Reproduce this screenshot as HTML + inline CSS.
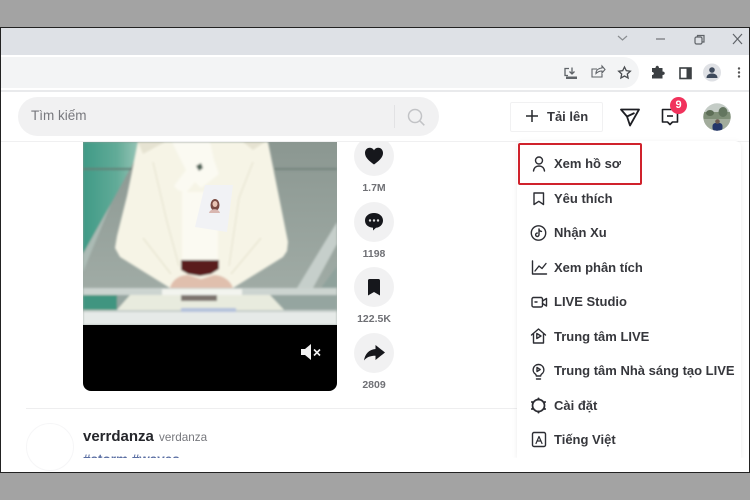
<!DOCTYPE html>
<html lang="vi">
<head>
<meta charset="utf-8">
<title>TikTok</title>
<style>
html{margin:0;padding:0;width:750px;height:500px;overflow:hidden;background:#a3a3a3}
body{margin:0;padding:0;width:750px;height:500px;overflow:hidden;background:#a3a3a3;font-family:"Liberation Sans","Noto Sans CJK SC",sans-serif;position:relative;filter:blur(.35px)}
*{box-sizing:border-box}
#win{position:absolute;left:0;top:27px;width:750px;height:446px;background:#fff;border:1px solid #222;overflow:hidden}
.t{position:absolute;white-space:nowrap;color:#36373c;font-weight:700;font-size:13px;line-height:16px}
.act{position:absolute;left:354px;width:40px;height:40px;border-radius:50%;background:#f1f1f2}
.cnt{position:absolute;left:344px;width:60px;text-align:center;font-size:10.5px;font-weight:700;color:#6f7075;line-height:12px;white-space:nowrap}
svg{position:absolute;overflow:visible}
</style>
</head>
<body>
<div id="win"></div>
<!-- Chrome strip -->
<div style="position:absolute;left:1px;top:28px;width:748px;height:27px;background:#dee1e6"></div>
<div style="position:absolute;left:1px;top:55px;width:748px;height:35px;background:#fff"></div>
<div style="position:absolute;left:1px;top:57px;width:638px;height:31px;background:#f3f4f5;border-radius:0 16px 16px 0"></div>
<div style="position:absolute;left:1px;top:90px;width:748px;height:2px;background:#e9eaec"></div>

<svg style="left:0;top:0" width="750" height="92" fill="none" stroke="#5f6368" stroke-width="1.2">
<path d="M618 36l4.500 4 4.500-4" stroke="#8a8d91"/>
<path d="M656 39h9" stroke="#6f7276"/>
<rect x="695" y="37" width="7" height="7" rx="1.500"/><path d="M697.500 37v-1.500h6.500v6.500h-2"/>
<path d="M733 34l9 10M742 34l-9 10"/>
<!-- download -->
<path d="M569 68.500h-4v7h3M572 67.500v6M569.500 71.500l2.500 2.500 2.500-2.500" stroke-width="1.300"/><path d="M566 76.500h11v2.500h-11z" fill="#5f6368" stroke="none"/>
<!-- share -->
<path d="M597 69h-5v8h10v-3M596 73c0-3 3-5 6-5v-2l3 3.500-3 3.500v-2c-2 0-4 .500-6 2.500z" stroke-width="1.100"/>
<!-- star -->
<path d="M624.500 67l1.800 3.700 4 .500-3 2.800.800 4-3.600-2-3.600 2 .800-4-3-2.800 4-.500z" stroke="#4a4d51" stroke-width="1.300"/>
<!-- puzzle -->
<path d="M652 68h3.500c0-3 3.500-3 3.500 0h3.500v3.500c3 0 3 3.500 0 3.500v3.500H652v-3.500c2.500 0 2.500-3 0-3z" fill="#3c4043" stroke="none"/>
<!-- side panel -->
<rect x="680" y="68" width="11" height="10.500" fill="#fff" stroke="#3c4043" stroke-width="1.600"/><rect x="686.500" y="67.500" width="5" height="11.500" fill="#3c4043" stroke="none"/>
<!-- profile -->
<circle cx="712" cy="72.500" r="9" fill="#dfe1e5" stroke="none"/>
<circle cx="712" cy="70" r="2.800" fill="#3e4a5c" stroke="none"/><path d="M706.500 78c0-3.500 3-4.500 5.500-4.500s5.500 1 5.500 4.500z" fill="#3e4a5c" stroke="none"/>
<circle cx="739" cy="68.500" r="1.200" fill="#555" stroke="none"/><circle cx="739" cy="72.500" r="1.200" fill="#555" stroke="none"/><circle cx="739" cy="76.500" r="1.200" fill="#555" stroke="none"/>
</svg>

<!-- header -->
<div style="position:absolute;left:1px;top:141px;width:748px;height:1px;background:#f0f0f1"></div>
<div style="position:absolute;left:18px;top:97px;width:421px;height:39px;border-radius:20px;background:#f1f1f2"></div>
<div class="t" style="left:31px;top:108px;font-weight:400;font-size:13.500px;color:#77787d">Tìm kiếm</div>
<div style="position:absolute;left:394px;top:105px;width:1px;height:23px;background:#e2e2e4"></div>
<svg style="left:406px;top:107px" width="20" height="20" fill="none" stroke="#c2c3c6" stroke-width="1.500"><circle cx="9" cy="9" r="6.500"/><path d="M13.800 13.800l4.500 4.500"/></svg>

<div style="position:absolute;left:510px;top:102px;width:93px;height:30px;background:#fff;border:1px solid #f1f1f2;border-radius:2px"></div>
<svg style="left:526px;top:110px" width="12" height="12" stroke="#27282d" stroke-width="1.500"><path d="M6 0v12M0 6h12"/></svg>
<div class="t" style="left:547px;top:109px;font-size:13px">Tải lên</div>

<svg style="left:620px;top:107px" width="20" height="20" fill="none" stroke="#1d1e23" stroke-width="1.800" stroke-linejoin="round"><path d="M1 2.500h18L10 18.500 7 9.500z"/><path d="M7 9.500L14.500 6"/></svg>
<svg style="left:661px;top:108px" width="18" height="20" fill="none" stroke="#1d1e23" stroke-width="1.600" stroke-linejoin="round"><path d="M1.500 1.500h15v12.500h-5L9 16.500 6.500 14h-5z"/><path d="M6 8h6"/></svg>
<div style="position:absolute;left:670px;top:97px;width:17px;height:17px;border-radius:50%;background:#f1325c;color:#fff;font-size:11px;font-weight:700;text-align:center;line-height:17px">9</div>

<svg style="left:703px;top:103px" width="28" height="28">
<defs><clipPath id="av"><circle cx="14" cy="14" r="13.700"/></clipPath></defs>
<g clip-path="url(#av)"><rect width="28" height="28" fill="#c4ccc6"/><rect y="9" width="28" height="7" fill="#7f8f78"/><rect y="16" width="28" height="12" fill="#a2ac9c"/><ellipse cx="7" cy="10" rx="4" ry="3" fill="#5c6d56"/><ellipse cx="20" cy="9" rx="4.500" ry="5" fill="#63755f"/><rect x="9.500" y="20" width="10" height="8" rx="3" fill="#24366a"/><circle cx="14.500" cy="18.500" r="2.300" fill="#6b5a50"/></g>
</svg>

<!-- video -->
<svg style="left:83px;top:142px" width="254" height="250" viewBox="0 0 254 250">
<defs>
<clipPath id="vc"><path d="M0 0h254v241a8 8 0 0 1-8 8H8a8 8 0 0 1-8-8z"/></clipPath>
<linearGradient id="g1" x1="0" y1="0" x2="1" y2="0"><stop offset="0" stop-color="#3f9a86"/><stop offset=".55" stop-color="#62ab98"/><stop offset="1" stop-color="#a8cdbf"/></linearGradient>
<linearGradient id="bg" x1="0" y1="0" x2="0" y2="1"><stop offset="0" stop-color="#8b9791"/><stop offset="1" stop-color="#a5b0aa"/></linearGradient>
<filter id="b1" x="-5%" y="-5%" width="110%" height="110%"><feGaussianBlur stdDeviation="1.100"/></filter>
</defs>
<g clip-path="url(#vc)">
<rect width="254" height="183" fill="url(#bg)"/>
<g filter="url(#b1)">
<!-- teal backdrop left -->
<path d="M0 0h62L0 112z" fill="url(#g1)"/>
<path d="M0 26h50v2H0z" fill="#3f7f70"/>
<path d="M0 112L28 62 0 130z" fill="#b4c5be" opacity=".7"/>
<path d="M0 26h254v2H0z" fill="#6d7d76" opacity=".8"/>
<!-- right light stripes -->
<path d="M214 146l40-66v22l-24 44z" fill="#c6cfcb"/>
<path d="M238 146l16-22v22z" fill="#8fa29c"/>
<!-- jacket -->
<path d="M55 0h130l10 50 10 50-1 9-4 6-50 31H87L37 115l-5-9 2-12 10-40z" fill="#f6f4e6"/>
<!-- lapel shading -->
<path d="M82 0L60 12 55 0zM160 0l10 8 12-8z" fill="#e6e3d2"/>
<path d="M70 20l14 60 12 44" fill="none" stroke="#eae7d5" stroke-width="1.500"/>
<path d="M170 20l-14 36-10 68" fill="none" stroke="#eae7d5" stroke-width="1.500"/>
<path d="M60 96l28 36M178 96l-30 36" fill="none" stroke="#e9e6d3" stroke-width="1.500"/>
<!-- shirt -->
<path d="M99 50h36v70H99z" fill="#fbfaf2"/>
<!-- bow -->
<path d="M89 0h38l4 18 5 14-18 14-6-6-9 11-8-3-4-4 12-16z" fill="#fbfaf2"/>
<path d="M113 24l5-3 2 5-4 3z" fill="#4f6357"/>
<!-- belt -->
<path d="M98 118h38v9l-8 5-11 2-12-2-7-4z" fill="#5a1f1a"/>
<!-- hands -->
<path d="M87 146c2-8 9-13 18-13l13 4 13-4c9 0 17 6 19 13z" fill="#e0bfad"/>
<!-- desk -->
<path d="M0 146h254v7H0z" fill="#ccd4d0"/>
<path d="M79 147h80v8H79z" fill="#f3f4ef"/>
<path d="M0 153h254v16H0z" fill="#95a5a0"/>
<path d="M0 153h34v16H0z" fill="#3f9580"/>
<path d="M33 169l14-16h140l15 16z" fill="#e8ebde"/>
<path d="M98 153h36v6H98z" fill="#7b726d"/>
<path d="M0 168h254v15H0z" fill="#e6eae8"/>
<path d="M0 168h254v2H0z" fill="#c5cdc9"/>
<path d="M98 166h55v4H98z" fill="#b4c1dc"/>
</g>
<!-- badge -->
<path d="M122 43h28l-6 47-32-5z" fill="#f1f2f5"/>
<ellipse cx="132" cy="63" rx="4.500" ry="6" fill="#7a4a42"/><path d="M126 71c1-5 10-5 11 0z" fill="#d8b6b0"/><ellipse cx="132" cy="62" rx="2.500" ry="3" fill="#e8c3b3"/>
<rect y="183" width="254" height="67" fill="#000"/>
</g>
</svg>
<svg style="left:300px;top:344px" width="22" height="17"><path d="M1 5h4l6-5v16l-6-5H1z" fill="#f1f1f1"/><path d="M14 5.500l6 6M20 5.500l-6 6" stroke="#f1f1f1" stroke-width="1.600"/></svg>

<!-- actions -->
<div class="act" style="top:136px"></div>
<div class="act" style="top:202px"></div>
<div class="act" style="top:267px"></div>
<div class="act" style="top:333px"></div>
<div style="position:absolute;left:340px;top:136px;width:70px;height:5px;background:#fff"></div>
<div style="position:absolute;left:340px;top:141px;width:70px;height:1px;background:#f0f0f1"></div>
<svg style="left:364px;top:147px" width="20" height="18"><path d="M10 17.500C6 14.500 1 11 1 6c0-3 2-5.200 4.700-5.200C7.500.8 9 1.800 10 3.200 11 1.800 12.500.8 14.300.8 17 .8 19 3 19 6c0 5-5 8.500-9 11.500z" fill="#16171c"/></svg>
<svg style="left:365px;top:213px" width="18" height="18"><path d="M9 0c5 0 9 3 9 7.500s-4 7.300-7 7.300L8 17.500v-2.800C3.800 14.500 0 12 0 7.500S4 0 9 0z" fill="#16171c"/><circle cx="5" cy="7.500" r="1.200" fill="#ddd"/><circle cx="9" cy="7.500" r="1.200" fill="#ddd"/><circle cx="13" cy="7.500" r="1.200" fill="#ddd"/></svg>
<svg style="left:367px;top:279px" width="14" height="17"><path d="M1 1.500C1 .7 1.600 0 2.400 0h9.200c.8 0 1.400.7 1.400 1.500V16.500L7 13l-6 3.500z" fill="#16171c"/></svg>
<svg style="left:364px;top:345px" width="21" height="16"><path d="M11.500 0L21 7.500 11.500 15v-4.200C6.500 10.800 3 12 0 15.500 1 9 5 4.500 11.500 4z" fill="#16171c"/></svg>
<div class="cnt" style="top:182px">1.7M</div>
<div class="cnt" style="top:248px">1198</div>
<div class="cnt" style="top:313px">122.5K</div>
<div class="cnt" style="top:379px">2809</div>

<!-- feed bottom -->
<div style="position:absolute;left:26px;top:408px;width:492px;height:1px;background:#eeeeef"></div>
<div style="position:absolute;left:26px;top:423px;width:48px;height:48px;border-radius:50%;border:1px solid #f6f6f7"></div>
<div class="t" style="left:83px;top:428px;font-size:15px;color:#25262b;line-height:18px">verrdanza</div>
<div class="t" style="left:159px;top:430px;font-size:11.700px;font-weight:400;color:#77787d">verdanza</div>
<div style="position:absolute;left:83px;top:452px;width:110px;height:6px;overflow:hidden"><div class="t" style="left:0;top:0;font-size:13.500px;color:#5b6fa3;font-weight:700">#storm #waves</div></div>

<!-- dropdown -->
<div style="position:absolute;left:517px;top:141px;width:224px;height:317px;background:#fff;box-shadow:0 1px 6px rgba(0,0,0,.08);border-radius:6px 6px 0 0"></div>
<div style="position:absolute;left:511px;top:458px;width:238px;height:14px;background:#fff"></div>
<div style="position:absolute;left:518px;top:143px;width:124px;height:42px;border:2.500px solid #d0222c;border-radius:2px"></div>

<div class="t" style="left:554px;top:156px">Xem hồ sơ</div>
<div class="t" style="left:554px;top:191px">Yêu thích</div>
<div class="t" style="left:554px;top:225px">Nhận Xu</div>
<div class="t" style="left:554px;top:260px">Xem phân tích</div>
<div class="t" style="left:554px;top:294px">LIVE Studio</div>
<div class="t" style="left:554px;top:329px">Trung tâm LIVE</div>
<div class="t" style="left:554px;top:363px">Trung tâm Nhà sáng tạo LIVE</div>
<div class="t" style="left:554px;top:398px">Cài đặt</div>
<div class="t" style="left:554px;top:432px">Tiếng Việt</div>

<svg style="left:0;top:0" width="750" height="500" fill="none" stroke="#2c2d33" stroke-width="1.400" stroke-linejoin="round" stroke-linecap="round">
<circle cx="539" cy="160.500" r="3.500"/><path d="M533.500 171c.4-3.500 2.800-5 5.500-5s5.100 1.500 5.500 5"/>
<path d="M534 193h9.500v11.500l-4.700-3.200-4.800 3.200z"/>
<circle cx="538.500" cy="233" r="7.200"/><path d="M539 229v5.800a1.700 1.700 0 1 1-1.700-1.700M539 229.300c.3 1.300 1.300 2 2.500 2.100"/>
<path d="M532.500 261v13h14M535 271l4-5 3 2.500 4-5"/>
<rect x="532" y="297.500" width="10.500" height="9.500" rx="1.500"/><path d="M542.500 301l4-2.500v7.500l-4-2.500M535 302h2"/>
<path d="M531.500 335l7-6 7 6M533.500 333.500v9.500h10v-9.500"/><path d="M536.800 333.500l4.200 2.500-4.200 2.500z"/>
<path d="M538.500 364.500a5.300 5.300 0 0 1 3 9.700c-.6.500-.8 1-.8 1.800h-4.400c0-.8-.2-1.300-.8-1.800a5.300 5.300 0 0 1 3-9.700zM536.500 379h4"/><path d="M537 367.500l3.200 2-3.200 2z"/>
<circle cx="538.500" cy="405.500" r="6" stroke-width="1.700"/><path d="M538.500 398.500v1M538.500 411.500v1M532 402l.9.500M544.100 408.500l.9.500M532 409l.9-.500M544.100 402.500l.9-.500" stroke-width="2"/>
<rect x="532.500" y="432.500" width="13" height="14" rx="1.500"/><path d="M536 443.500l3-7 3 7M537 441h4" stroke-width="1.200"/>
</svg>
</body>
</html>
